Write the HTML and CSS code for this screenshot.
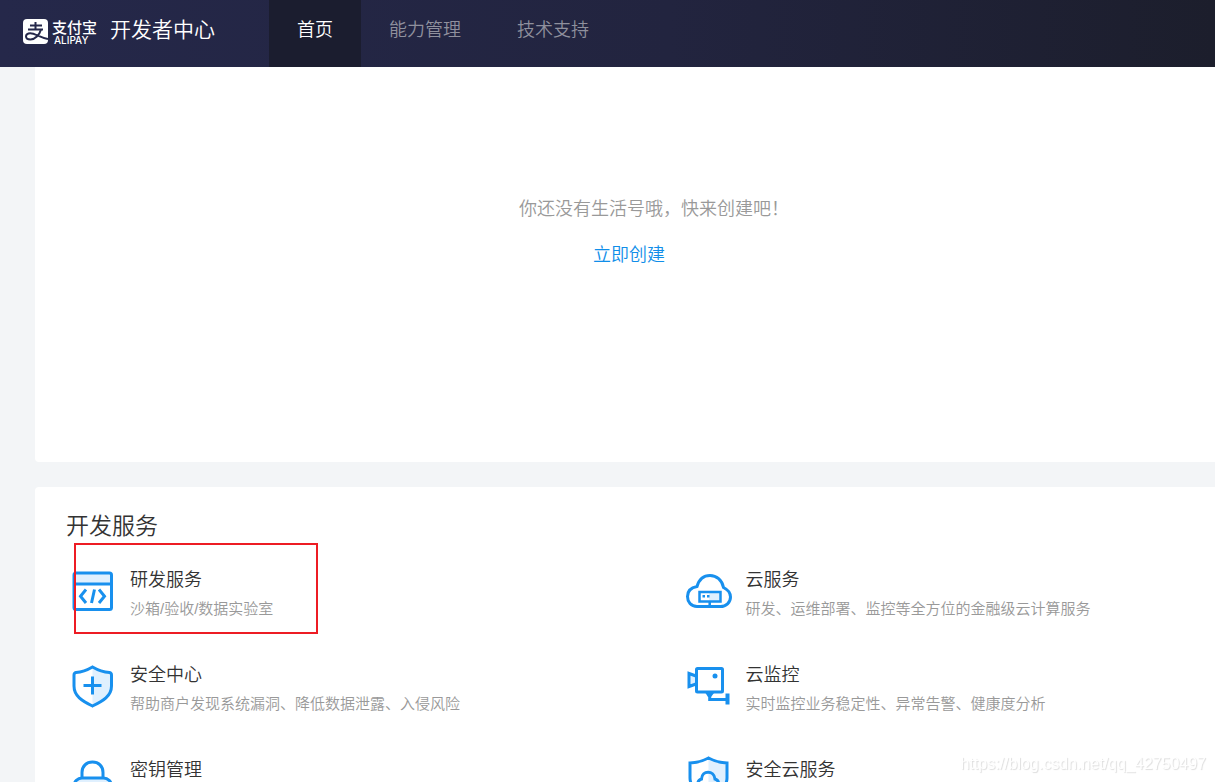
FILE: index.html
```
<!DOCTYPE html>
<html lang="zh-CN">
<head>
<meta charset="utf-8">
<title>开发者中心</title>
<link rel="stylesheet" href="styles.css">
</head>
<body>
<header class="header">
  <a class="brand" href="#">
    <svg class="brand-mark" viewBox="0 0 25 25" aria-hidden="true">
      <rect width="25" height="25" rx="4" fill="#fff"/>
      <g fill="none" stroke="#25284a" stroke-width="2">
        <path d="M7 6.500H19M5 10.500H20M12.500 3V10.500"/>
        <path d="M18 10.500C16.500 16 12 20.500 7.500 20.500C4.500 20.500 3 19 3 17.300C3 15.500 4.800 14.200 7.200 14.200C12 14.200 17 18.500 25 20"/>
      </g>
    </svg>
    <span class="brand-name"><span class="brand-cn">支付宝</span><span class="brand-en">ALIPAY</span></span>
    <span class="brand-title">开发者中心</span>
  </a>
  <nav class="nav">
    <a class="nav-item active" href="#">首页</a>
    <a class="nav-item" href="#">能力管理</a>
    <a class="nav-item" href="#">技术支持</a>
  </nav>
</header>
<main class="page">
  <section class="card empty">
    <p class="empty-text">你还没有生活号哦，快来创建吧！</p>
    <a class="empty-link" href="#">立即创建</a>
  </section>
  <section class="card services">
    <h2 class="services-title">开发服务</h2>
    <div class="grid">
      <a class="item marked" href="#">
        <svg class="icon" viewBox="0 0 52 48" aria-hidden="true">
          <path class="tint" d="M8 5H45V16H8Z"/>
          <rect x="8" y="5" width="37.500" height="36.500" rx="2"/>
          <path d="M8 16H45.500M20 21.500L14.500 28.200L20 35M28.500 21.500L25.500 35M33 21.500L38.500 28.200L33 35"/>
        </svg>
        <span class="item-body"><span class="item-name">研发服务</span><span class="item-desc">沙箱/验收/数据实验室</span></span>
      </a>
      <a class="item" href="#">
        <svg class="icon" viewBox="0 0 52 48" aria-hidden="true">
          <rect class="tint" x="27" y="24" width="11" height="9"/>
          <path d="M15 38.500C9 38.500 5.500 34 5.500 28.500C5.500 23 9.500 19.500 15 18.500C17 11.500 22 7.500 28 7.500C34.500 7.500 40 12 41.500 19.500C45.500 21.500 48.500 25 48.500 29C48.500 34.500 44 38.500 38.500 38.500Z"/>
          <path class="thin" d="M17.500 24H38.500V33.500H17.500ZM27.700 34V38"/>
          <path class="solid" d="M20.500 27h2.500v2.500H20.500zM25 27h2.500v2.500H25z"/>
        </svg>
        <span class="item-body"><span class="item-name">云服务</span><span class="item-desc">研发、运维部署、监控等全方位的金融级云计算服务</span></span>
      </a>
      <a class="item" href="#">
        <svg class="icon" viewBox="0 0 52 48" aria-hidden="true">
          <path class="tint" d="M26.500 4Q35 9 45.500 10V24Q44 36 26.500 43Z"/>
          <path d="M26.500 4Q18 9 10 9.500Q8 10 8 12V23C8 33 16 38 26.500 43C37 38 45.500 33 45.500 23V12Q45.500 10 43.500 9.500Q35 9 26.500 4ZM26.500 13.500V31.500M17.500 22.500H35.500"/>
        </svg>
        <span class="item-body"><span class="item-name">安全中心</span><span class="item-desc">帮助商户发现系统漏洞、降低数据泄露、入侵风险</span></span>
      </a>
      <a class="item" href="#">
        <svg class="icon" viewBox="0 0 52 48" aria-hidden="true">
          <path class="tint" d="M7 10L14 12.500V21.500L7 24Z"/>
          <rect x="14.500" y="5.500" width="26" height="23.500" rx="1"/>
          <path d="M14 13L7 10.500V23.500L14 21M27.700 30V36.500H45"/>
          <path class="solid" d="M23.500 30H32L29 34H26ZM43.500 30.500H47.500V41.500H43.500Z"/>
          <circle class="solid" cx="33" cy="13" r="2.500"/>
        </svg>
        <span class="item-body"><span class="item-name">云监控</span><span class="item-desc">实时监控业务稳定性、异常告警、健康度分析</span></span>
      </a>
      <a class="item" href="#">
        <svg class="icon" viewBox="0 0 52 48" aria-hidden="true">
          <rect class="tint" x="8" y="20" width="37.500" height="24" rx="8"/>
          <path d="M16 19.500V14.500C16 8 20.500 4 26.500 4S37 8 37 14.500V19.500"/>
          <rect x="8" y="20" width="37.500" height="24" rx="8"/>
        </svg>
        <span class="item-body"><span class="item-name">密钥管理</span></span>
      </a>
      <a class="item" href="#">
        <svg class="icon" viewBox="0 0 52 48" aria-hidden="true">
          <path class="tint" d="M26.500 0Q35 4.500 45 5V22Q44 32 26.500 39Z"/>
          <path d="M26.500 0Q18 4.500 8 5V20C8 29 16 34 26.500 39C37 34 45 29 45 20V5Q35 4.500 26.500 0Z"/>
          <path d="M19 29C15 29 14.500 22.500 19.500 21C20 12 32 12 33 21C38 22.500 37.500 29 33.500 29Z"/>
        </svg>
        <span class="item-body"><span class="item-name">安全云服务</span></span>
      </a>
    </div>
  </section>
</main>
<div class="watermark">https://blog.csdn.net/qq_42750497</div>
</body>
</html>
```
FILE: styles.css
```
*, *::after { box-sizing: border-box; }
body {
  margin: 0;
  height: 100vh;
  overflow: hidden;
  background: #f3f5f7;
  color: #333;
  font-family: "Liberation Sans", "Noto Sans CJK SC", sans-serif;
  font-size: 18px;
  font-weight: 350;
}
a { color: inherit; text-decoration: none; }
.header {
  display: flex;
  height: 67px;
  background: linear-gradient(90deg, #25284a, #22243f 55%, #1c1e2c);
}
.brand {
  display: flex;
  align-items: flex-start;
  width: 269px;
  padding-left: 23px;
  color: #fff;
}
.brand-mark { width: 25px; height: 25px; margin-top: 19px; }
.brand-name {
  display: flex;
  flex-direction: column;
  width: 48px;
  margin: 20px 10px 0 4px;
}
.brand-cn { font-size: 15px; font-weight: 500; line-height: 15px; }
.brand-en {
  padding-left: 2px;
  font-family: Inter, sans-serif;
  font-size: 10px;
  font-weight: 500;
  line-height: 11px;
}
.brand-title { font-size: 21px; line-height: 60px; }
.nav { display: flex; }
.nav-item { padding: 0 28px; line-height: 60px; color: #8f909d; }
.nav-item.active { background: #1b1d2f; color: #fff; }
.page { padding-left: 35px; }
.card { background: #fff; border-radius: 4px 0 0 4px; }
.empty {
  display: flex;
  flex-direction: column;
  align-items: center;
  gap: 16px;
  padding: 127px 0 191px 8px;
  margin-bottom: 25px;
  border-top-left-radius: 0;
  line-height: 30px;
}
.empty-text { margin: 0; padding-left: 50px; color: #999; }
.empty-link { line-height: 31px; color: #108ee9; }
.services { padding: 21px 0 0 31px; }
.services-title { margin: 0; font-size: 23px; font-weight: 350; line-height: 36px; }
.grid { display: grid; grid-template-columns: 15fr 13fr; }
.item {
  position: relative;
  display: flex;
  gap: 12px;
  min-height: 94px;
  padding: 24px 0 18px;
}
.marked::after {
  content: "";
  position: absolute;
  top: -1px;
  left: 8px;
  width: 244px;
  height: 91px;
  border: 2px solid #ed1c24;
}
.icon {
  flex: none;
  width: 52px;
  height: 48px;
  overflow: visible;
  fill: none;
  stroke: #1890ee;
  stroke-width: 3;
}
.icon .tint { fill: #e0f0fe; stroke: none; }
.icon .solid { fill: #1890ee; stroke: none; }
.icon .thin { stroke-width: 2.5; }
.item-body { display: flex; flex-direction: column; gap: 5px; }
.item-name { line-height: 24px; }
.item-desc { font-size: 15px; line-height: 24px; color: #999; }
.watermark {
  position: fixed;
  right: 9px;
  bottom: 8px;
  font-family: "Liberation Sans", sans-serif;
  font-size: 16px;
  font-weight: 400;
  line-height: 20px;
  color: #fff;
  text-shadow: 1px 1px 1px #ddd;
}
```
